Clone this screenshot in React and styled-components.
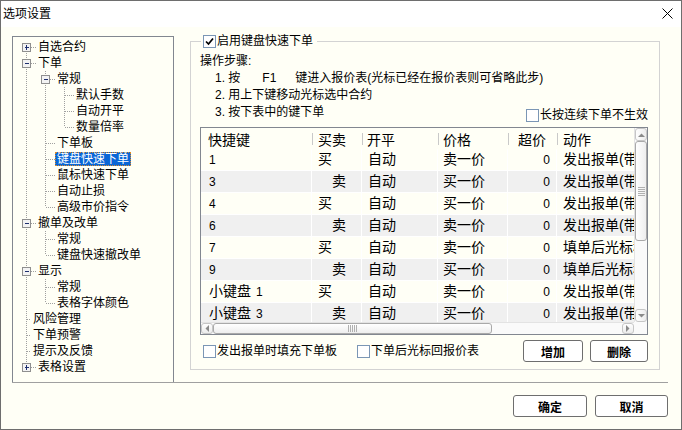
import React from 'react';
import styled, { createGlobalStyle } from 'styled-components';

const GlobalStyle = createGlobalStyle`
  html, body {
    margin: 0;
    padding: 0;
    background: #fffff6;
  }
  body {
    font-family: "Liberation Sans", "Noto Sans CJK SC", sans-serif;
    font-size: 12px;
    color: #000;
  }
  * {
    box-sizing: border-box;
  }
`;

const Window = styled.div`
  display: flex;
  flex-direction: column;
  width: 682px;
  height: 430px;
  overflow: hidden;
  border: 1px solid #6e6e6e;
  background: #fffff6;
`;

const TitleBar = styled.div`
  display: flex;
  height: 26px;
  padding: 0 8px 1px 2px;
  align-items: center;
  justify-content: space-between;
  background: #fff;
  line-height: 14px;
`;

const Main = styled.div`
  display: flex;
  height: 355px;
  padding-left: 11px;
  align-items: flex-start;
`;

const TreePanel = styled.div`
  width: 162px;
  height: 346px;
  margin-top: 9px;
  padding-top: 2px;
  border: 1px solid #828790;
  border-bottom: none;
`;

const TreeRow = styled.div`
  display: flex;
  height: 16px;
  align-items: center;
  white-space: nowrap;
`;

const Glyph = styled.svg`
  display: block;
  flex: none;
`;

const TreeLabel = styled.span`
  display: inline-flex;
  height: 14px;
  padding: 0 1px;
  align-items: center;
  border: 1px dotted ${p => (p.$selected ? '#d98a2b' : 'transparent')};
  background: ${p => (p.$selected ? '#0a66d6' : 'transparent')};
  color: ${p => (p.$selected ? '#fff' : '#000')};
  line-height: 12px;
`;

const Group = styled.fieldset`
  width: 470px;
  height: 337px;
  min-width: 0;
  margin: 6px 0 0 16px;
  padding: 4px 11px 0 9px;
  border: 1px solid #d3d3d3;
`;

const Legend = styled.legend`
  display: flex;
  height: 16px;
  margin-left: 1px;
  padding: 0 4px 0 2px;
  align-items: center;
`;

const Option = styled.label`
  display: inline-flex;
  height: 14px;
  margin-top: ${p => p.$offset || 0}px;
  gap: 1px;
  align-items: center;
  line-height: 14px;
  white-space: nowrap;
`;

const CheckBox = styled.span`
  display: inline-flex;
  flex: none;
  width: 13px;
  height: 13px;
  align-items: center;
  justify-content: center;
  border: 1px solid #7b96b5;
  background: #fff;
`;

const Steps = styled.div`
  line-height: 17px;
`;

const StepLine = styled.div`
  height: 17px;
  padding-left: 15px;
  white-space: nowrap;
`;

const StepRow = styled.div`
  display: flex;
  height: 17px;
  align-items: flex-start;
  justify-content: space-between;
`;

const KeyName = styled.span`
  display: inline-block;
  width: 33px;
  margin-left: 22px;
`;

const TableBox = styled.div`
  display: grid;
  grid-template-columns: 1fr 13px;
  grid-template-rows: 1fr 12px;
  height: 208px;
  margin-top: 6px;
  border: 1px solid #828790;
`;

const ListArea = styled.div`
  overflow: hidden;
  font-size: 14px;
`;

const COLS = '111px 50px 76px 70px 49px 140px';

const HeadRow = styled.div`
  display: grid;
  grid-template-columns: ${COLS};
  height: 21px;
`;

const HeadCell = styled.div`
  display: flex;
  padding-left: ${p => p.$pad || 0}px;
  padding-right: ${p => (p.$right ? 11 : 0)}px;
  align-items: center;
  justify-content: ${p => (p.$right ? 'space-between' : 'flex-start')};
  gap: ${p => p.$gap || 0}px;
  white-space: nowrap;
`;

const HeadDivider = styled.span`
  flex: none;
  width: 1px;
  height: 12px;
  background: #c9c9c9;
`;

const DataRow = styled.div`
  display: grid;
  grid-template-columns: ${COLS};
  height: 22px;
  border-bottom: 1px solid #fff;
  background: ${p => (p.$alt ? '#f0f0f0' : 'transparent')};
`;

const Cell = styled.div`
  overflow: hidden;
  padding-left: ${p => p.$pad || 0}px;
  padding-right: ${p => (p.$right ? 6 : 0)}px;
  border-right: 1px solid #fff;
  line-height: 21px;
  text-align: ${p => (p.$right ? 'right' : 'left')};
  white-space: nowrap;
`;

const Num = styled.span`
  margin-left: ${p => p.$gap || 0}px;
  font-size: 12px;
`;

const VScroll = styled.div`
  display: flex;
  flex-direction: column;
  border-left: 1px solid #e3e3e3;
  background: #fafafa;
`;

const HScroll = styled.div`
  display: flex;
  border-top: 1px solid #e3e3e3;
  background: #fafafa;
`;

const Corner = styled.div`
  background: #fafafa;
`;

const ScrollButton = styled.div`
  display: flex;
  flex: none;
  width: ${p => (p.$vertical ? '100%' : '12px')};
  height: ${p => (p.$vertical ? '13px' : '100%')};
  align-items: center;
  justify-content: center;
  border: 1px solid #c6c6c6;
  border-radius: 3px;
  background: linear-gradient(${p => (p.$vertical ? '90deg' : '180deg')}, #fefefe, #ececec);
`;

const Track = styled.div`
  display: flex;
  flex: 1;
  flex-direction: ${p => (p.$vertical ? 'column' : 'row')};
`;

const Thumb = styled.div`
  display: flex;
  flex: none;
  width: ${p => (p.$vertical ? '100%' : `${p.$size}px`)};
  height: ${p => (p.$vertical ? `${p.$size}px` : '100%')};
  align-items: center;
  justify-content: center;
  border: 1px solid #a9a9a9;
  border-radius: 3px;
  background: linear-gradient(${p => (p.$vertical ? '90deg' : '180deg')}, #ffffff, #eeeeee);
`;

const BottomRow = styled.div`
  display: flex;
  height: 22px;
  margin-top: 5px;
  padding-left: 3px;
  align-items: center;
`;

const Spacer = styled.div`
  width: ${p => p.$w}px;
  flex: none;
`;

const Button = styled.button`
  width: ${p => p.$w}px;
  height: 22px;
  padding: 0;
  border: 1px solid #6e6e6e;
  border-radius: 3px;
  background: #fff;
  font-family: "Liberation Sans", "Noto Sans CJK SC", sans-serif;
  font-size: 12px;
  font-weight: bold;
  color: #000;
`;

const ButtonGroup = styled.div`
  display: flex;
  margin-left: auto;
  gap: ${p => p.$gap}px;
`;

const Separator = styled.div`
  height: 1px;
  margin: 0 13px 0 11px;
  background: #a0a0a0;
`;

const Footer = styled.div`
  display: flex;
  padding: 12px 13px 0 0;
  justify-content: flex-end;
  gap: 8px;
`;

const TREE = [
  { label: '自选合约', level: 0, exp: 'plus' },
  { label: '下单', level: 0, exp: 'minus' },
  { label: '常规', level: 1, exp: 'minus' },
  { label: '默认手数', level: 2 },
  { label: '自动开平', level: 2 },
  { label: '数量倍率', level: 2 },
  { label: '下单板', level: 1 },
  { label: '键盘快速下单', level: 1, selected: true },
  { label: '鼠标快速下单', level: 1 },
  { label: '自动止损', level: 1 },
  { label: '高级市价指令', level: 1 },
  { label: '撤单及改单', level: 0, exp: 'minus' },
  { label: '常规', level: 1 },
  { label: '键盘快速撤改单', level: 1 },
  { label: '显示', level: 0, exp: 'minus' },
  { label: '常规', level: 1 },
  { label: '表格字体颜色', level: 1 },
  { label: '风险管理', level: 0 },
  { label: '下单预警', level: 0 },
  { label: '提示及反馈', level: 0 },
  { label: '表格设置', level: 0, exp: 'plus' }
];

// column width / line x for each tree level
const LEVELS = [
  { width: 25, line: 13 },
  { width: 19, line: 7 },
  { width: 19, line: 7 }
];

const hasNextSibling = (i) => {
  const lvl = TREE[i].level;
  for (let j = i + 1; j < TREE.length; j++) {
    if (TREE[j].level < lvl) return false;
    if (TREE[j].level === lvl) return true;
  }
  return false;
};

const ancestorAt = (i, lvl) => {
  for (let j = i - 1; j >= 0; j--) {
    if (TREE[j].level === lvl) return j;
  }
  return -1;
};

const DOT = { stroke: '#a0a0a0', strokeDasharray: '1 1', shapeRendering: 'crispEdges' };

const Guide = ({ width, line, active }) => (
  <Glyph width={width} height={16}>
    {active && <line x1={line + 0.5} y1={0} x2={line + 0.5} y2={16} {...DOT} />}
  </Glyph>
);

const Connector = ({ width, line, first, last, exp }) => {
  const x = line + 0.5;
  return (
    <Glyph width={width} height={16}>
      <line x1={x} y1={first ? 8 : 0} x2={x} y2={last ? 8 : 16} {...DOT} />
      <line x1={exp ? line + 5 : line + 1} y1={8.5} x2={width} y2={8.5} {...DOT} />
      {exp && (
        <g shapeRendering="crispEdges">
          <rect x={line - 3.5} y={4.5} width={8} height={8} fill="#f3f3f3" stroke="#8f8f8f" />
          <line x1={line - 1} y1={8.5} x2={line + 3} y2={8.5} stroke="#1e2f6e" />
          {exp === 'plus' && <line x1={x} y1={6} x2={x} y2={11} stroke="#1e2f6e" />}
        </g>
      )}
    </Glyph>
  );
};

const Tree = () => (
  <TreePanel>
    {TREE.map((node, i) => {
      const guides = [];
      for (let l = 0; l < node.level; l++) {
        const a = ancestorAt(i, l);
        guides.push(<Guide key={l} {...LEVELS[l]} active={a >= 0 && hasNextSibling(a)} />);
      }
      const own = LEVELS[node.level];
      const width = node.level === 0 && !node.exp ? 18 : own.width - 2;
      return (
        <TreeRow key={i}>
          {guides}
          <Connector
            width={width}
            line={own.line}
            first={i === 0}
            last={!hasNextSibling(i)}
            exp={node.exp}
          />
          <TreeLabel $selected={node.selected}>{node.label}</TreeLabel>
        </TreeRow>
      );
    })}
  </TreePanel>
);

const Check = ({ checked }) => (
  <CheckBox>
    {checked && (
      <Glyph width={9} height={9} viewBox="0 0 9 9">
        <path d="M1 4.5 L3.5 7 L8 1.5" fill="none" stroke="#000" strokeWidth="1.7" />
      </Glyph>
    )}
  </CheckBox>
);

const Arrow = ({ dir }) => {
  const pts = {
    up: '0,4 3.5,0.5 7,4',
    down: '0,0 3.5,3.5 7,0',
    left: '4,0 0.5,3.5 4,7',
    right: '0,0 3.5,3.5 0,7'
  }[dir];
  const vertical = dir === 'up' || dir === 'down';
  return (
    <Glyph width={vertical ? 7 : 4} height={vertical ? 4 : 7}>
      <polygon points={pts} fill="#8a8a8a" />
    </Glyph>
  );
};

const Grip = ({ vertical }) => (
  <Glyph width={vertical ? 7 : 9} height={vertical ? 9 : 7} shapeRendering="crispEdges">
    {[0, 2, 4, 6, 8].map(o =>
      vertical ? (
        <line key={o} x1={0} y1={o + 0.5} x2={7} y2={o + 0.5} stroke="#b0b0b0" />
      ) : (
        <line key={o} x1={o + 0.5} y1={0} x2={o + 0.5} y2={7} stroke="#b0b0b0" />
      )
    )}
  </Glyph>
);

const ROWS = [
  { pad: '', key: '1', side: '买', price: '卖一价', action: '发出报单(带价格)' },
  { pad: '', key: '3', side: '卖', price: '买一价', action: '发出报单(带价格)' },
  { pad: '', key: '4', side: '买', price: '买一价', action: '发出报单(带价格)' },
  { pad: '', key: '6', side: '卖', price: '卖一价', action: '发出报单(带价格)' },
  { pad: '', key: '7', side: '买', price: '卖一价', action: '填单后光标移到下单板' },
  { pad: '', key: '9', side: '卖', price: '买一价', action: '填单后光标移到下单板' },
  { pad: '小键盘', key: '1', side: '买', price: '卖一价', action: '发出报单(带价格)' },
  { pad: '小键盘', key: '3', side: '卖', price: '买一价', action: '发出报单(带价格)' }
];

const KeyTable = () => (
  <TableBox>
    <ListArea>
      <HeadRow>
        <HeadCell $pad={7}>快捷键</HeadCell>
        <HeadCell $gap={5}><HeadDivider />买卖</HeadCell>
        <HeadCell $gap={4}><HeadDivider />开平</HeadCell>
        <HeadCell $gap={4}><HeadDivider />价格</HeadCell>
        <HeadCell $right><HeadDivider />超价</HeadCell>
        <HeadCell $gap={5}><HeadDivider />动作</HeadCell>
      </HeadRow>
      {ROWS.map((row, i) => (
        <DataRow key={i} $alt={i % 2 === 1}>
          <Cell $pad={8}>
            {row.pad}
            <Num $gap={row.pad ? 5 : 0}>{row.key}</Num>
          </Cell>
          <Cell $pad={row.side === '卖' ? 20 : 6}>{row.side}</Cell>
          <Cell $pad={6}>自动</Cell>
          <Cell $pad={5}>{row.price}</Cell>
          <Cell $right><Num>0</Num></Cell>
          <Cell $pad={6}>{row.action}</Cell>
        </DataRow>
      ))}
    </ListArea>
    <VScroll>
      <ScrollButton $vertical><Arrow dir="up" /></ScrollButton>
      <Track $vertical>
        <Thumb $vertical $size={100}><Grip vertical /></Thumb>
      </Track>
      <ScrollButton $vertical><Arrow dir="down" /></ScrollButton>
    </VScroll>
    <HScroll>
      <ScrollButton><Arrow dir="left" /></ScrollButton>
      <Track>
        <Thumb $size={279}><Grip /></Thumb>
      </Track>
      <ScrollButton><Arrow dir="right" /></ScrollButton>
    </HScroll>
    <Corner />
  </TableBox>
);

const App = () => (
  <>
    <GlobalStyle />
    <Window>
      <TitleBar>
        <span>选项设置</span>
        <Glyph width={11} height={11}>
          <path d="M0.5 0.5 L10.5 10.5 M10.5 0.5 L0.5 10.5" stroke="#000" strokeWidth="1" />
        </Glyph>
      </TitleBar>
      <Main>
        <Tree />
        <Group>
          <Legend>
            <Option><Check checked />启用键盘快速下单</Option>
          </Legend>
          <Steps>
            <div>操作步骤:</div>
            <StepLine>1. 按<KeyName>F1</KeyName>键进入报价表(光标已经在报价表则可省略此步)</StepLine>
            <StepLine>2. 用上下键移动光标选中合约</StepLine>
            <StepRow>
              <StepLine>3. 按下表中的键下单</StepLine>
              <Option $offset={4}><Check />长按连续下单不生效</Option>
            </StepRow>
          </Steps>
          <KeyTable />
          <BottomRow>
            <Option><Check />发出报单时填充下单板</Option>
            <Spacer $w={20} />
            <Option><Check />下单后光标回报价表</Option>
            <ButtonGroup $gap={7}>
              <Button $w={60}>增加</Button>
              <Button $w={58}>删除</Button>
            </ButtonGroup>
          </BottomRow>
        </Group>
      </Main>
      <Separator />
      <Footer>
        <Button $w={74}>确定</Button>
        <Button $w={73}>取消</Button>
      </Footer>
    </Window>
  </>
);

export default App;
